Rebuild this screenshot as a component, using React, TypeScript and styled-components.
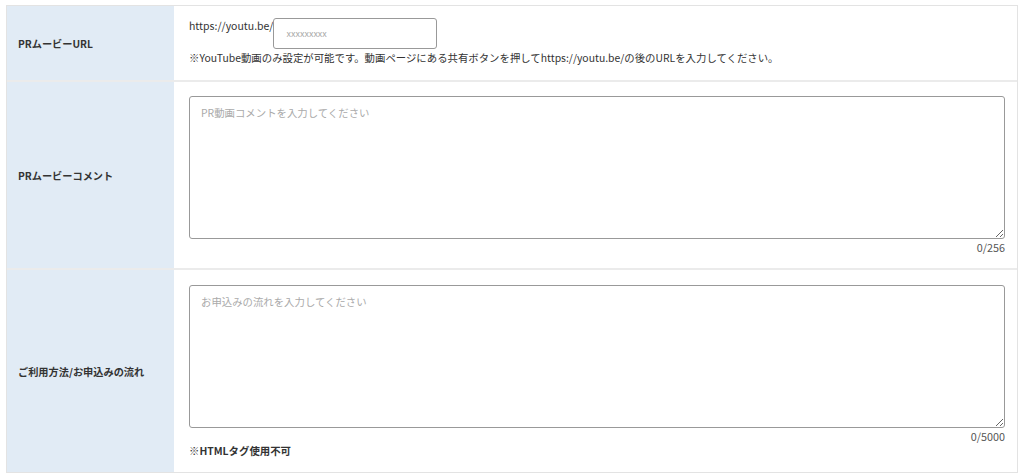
import styled, { createGlobalStyle } from "styled-components";

const GlobalStyle = createGlobalStyle`
  body {
    margin: 0;
    background: #fff;
    font-family: "Noto Sans CJK JP", "Noto Sans", sans-serif;
    color: #333;
  }
`

const Page = styled.div`
  padding: 5px 6px 0 6px;
`
const Table = styled.div`
  border: 1px solid #e3e3e3;
  display: grid;
  grid-template-columns: 167px 1fr;
`
const Label = styled.div<{ $last?: boolean }>`
  background: #e1ebf5;
  display: flex;
  align-items: center;
  padding-left: 11px;
  font-size: 10.2px;
  font-weight: bold;
  color: #333;
  border-bottom: ${p => (p.$last ? "none" : "2px solid #ebebeb")};
`
const Cell = styled.div<{ $last?: boolean; $pad: string }>`
  padding: ${p => p.$pad};
  border-bottom: ${p => (p.$last ? "none" : "2px solid #ebebeb")};
`
const UrlLine = styled.div`
  display: flex;
  align-items: flex-start;
  font-size: 10.5px;
  line-height: 14px;
`
const Prefix = styled.span`
  padding-top: 1px;
`
const UrlInput = styled.input`
  width: 164px;
  height: 31px;
  box-sizing: border-box;
  border: 1px solid #999;
  border-radius: 3px;
  padding: 0 12px;
  font-family: inherit;
  font-size: 9px;
  outline: none;
  &::placeholder {
    color: #aaa;
  }
`
const Note = styled.div<{ $bold?: boolean }>`
  font-size: 10.4px;
  font-weight: ${p => (p.$bold ? "bold" : "normal")};
  color: #333;
  line-height: 14px;
`
const TextArea = styled.textarea<{ $h: number }>`
  display: block;
  width: 100%;
  height: ${p => p.$h}px;
  box-sizing: border-box;
  border: 1px solid #999;
  border-radius: 3px;
  padding: 8px 11px;
  font-family: inherit;
  font-size: 10.4px;
  color: #333;
  outline: none;
  resize: vertical;
  &::placeholder {
    color: #aaa;
  }
`
const Counter = styled.div`
  text-align: right;
  font-size: 10.8px;
  line-height: 14px;
  color: #555;
  margin-top: 1px;
`

const App = () => (
  <Page>
    <GlobalStyle />
    <Table>
      <Label>PRムービーURL</Label>
      <Cell $pad="12px 15px 15px 15px">
        <UrlLine>
          <Prefix>https://youtu.be/</Prefix>
          <UrlInput placeholder="xxxxxxxxx" />
        </UrlLine>
        <Note style={{ marginTop: 2 }}>
          ※YouTube動画のみ設定が可能です。動画ページにある共有ボタンを押してhttps://youtu.be/の後のURLを入力してください。
        </Note>
      </Cell>

      <Label>PRムービーコメント</Label>
      <Cell $pad="14px 12px 14px 15px">
        <TextArea $h={143} placeholder="PR動画コメントを入力してください" />
        <Counter>0/256</Counter>
      </Cell>

      <Label $last>ご利用方法/お申込みの流れ</Label>
      <Cell $last $pad="15px 12px 14px 15px">
        <TextArea $h={143} placeholder="お申込みの流れを入力してください" />
        <Counter>0/5000</Counter>
        <Note $bold style={{ marginTop: 1 }}>※HTMLタグ使用不可</Note>
      </Cell>
    </Table>
  </Page>
)

export default App;
